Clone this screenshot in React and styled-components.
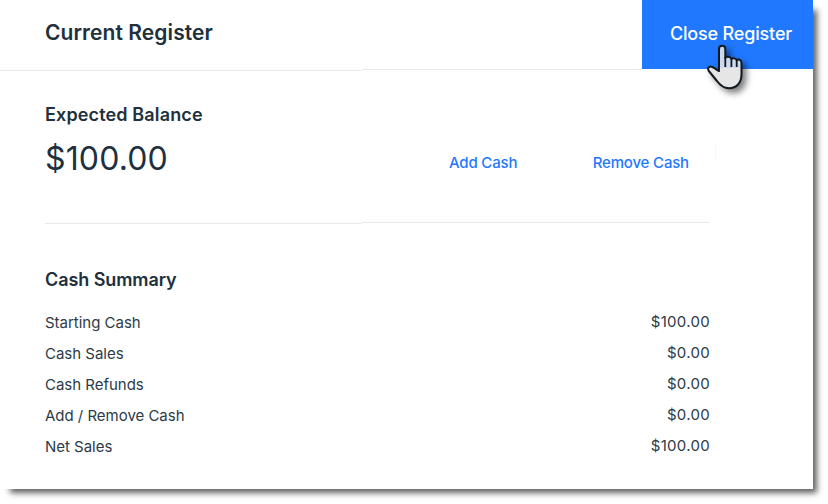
import React from "react";
import styled, {createGlobalStyle} from "styled-components";


const GlobalStyle = createGlobalStyle`
    *{
        box-sizing: border-box;
    }
    body{
        margin: 0;
        background-color: #fff;
        font-family: Inter, "Liberation Sans", sans-serif;
        color: #20303c;
    }
`;

const Page = styled.div`
    width: 828px;
    height: 504px;
    overflow: hidden;
    background-color: #fff;
`;

const Panel = styled.div`
    position: relative;
    width: 813px;
    height: 489px;
    background-color: #fff;
    box-shadow: 7px 7px 6px -3px rgba(0,0,0,0.62);
`;

const Header = styled.header`
    display: flex;
    flex-flow: column nowrap;
    height: 71px;
`;

const HeaderBar = styled.div`
    display: flex;
    flex: none;
    justify-content: space-between;
    height: 69px;
    padding-left: 45px;

    >h1{
        margin: 0;
        font-size: 21px;
        line-height: 65px;
        font-weight: 600;
        letter-spacing: 0.08px;
    }
`;

const CloseButton = styled.button`
    width: 171px;
    height: 69px;
    padding: 0 0 2px 7px;
    border: 0;
    background-color: #1f78ff;
    color: #fff;
    font: 500 18px Inter, "Liberation Sans", sans-serif;
    letter-spacing: -0.17px;
    white-space: nowrap;
`;

/* the rule steps up by one pixel at its second part */
const Rule = styled.div`
    display: flex;
    flex: none;
    height: 2px;
    width: ${p => p.$width}px;

    &::before, &::after{
        content: "";
        height: 1px;
        background-color: #e6e9ee;
    }
    &::before{
        width: ${p => p.$step}px;
        margin-top: 1px;
    }
    &::after{
        flex: 1;
    }
`;

const Content = styled.main`
    width: 710px;
    padding-left: 45px;
`;

const SectionTitle = styled.h2`
    margin: 0;
    font-size: 18px;
    line-height: 24px;
    font-weight: 600;
    letter-spacing: ${p => p.$spacing || 0}px;
`;

const Balance = styled.section`
    height: 151px;
    padding-top: 32px;
`;

const BalanceRow = styled.div`
    display: flex;
    align-items: center;
    height: 62px;
    width: 671px;
`;

const Amount = styled.div`
    width: 404px;
    padding-top: 2px;
    font-size: 32px;
    line-height: 40px;
    letter-spacing: 0.15px;
`;

const CashLink = styled.a`
    margin-right: ${p => p.$gap || 0}px;
    padding-top: 10px;
    color: #1f78ff;
    font-size: 15px;
    line-height: 20px;
    font-weight: 500;
    letter-spacing: -0.18px;
    white-space: nowrap;
`;

const Tick = styled.i`
    width: 1px;
    height: 18px;
    margin: 0 0 12px auto;
    background-color: #f6f7f9;
`;

const Summary = styled.section`
    padding-top: 44px;
`;

const SummaryList = styled.dl`
    margin: 14.5px 0 0;
`;

const SummaryRow = styled.div`
    display: flex;
    justify-content: space-between;
    height: 31.1px;
    font-size: 15px;
    line-height: 31px;
    color: #2c3b47;

    >dt{
        letter-spacing: -0.02px;
    }
    >dd{
        margin: -1px 0 0;
        letter-spacing: 0.3px;
    }
`;

const Pointer = styled.svg`
    position: absolute;
    left: 700px;
    top: 40px;
    overflow: visible;
    filter: drop-shadow(4px 4px 3px rgba(0,0,0,0.5));
`;


const rows = [
    {name: "Starting Cash", value: "$100.00"},
    {name: "Cash Sales", value: "$0.00"},
    {name: "Cash Refunds", value: "$0.00"},
    {name: "Add / Remove Cash", value: "$0.00"},
    {name: "Net Sales", value: "$100.00"},
];

const HandPointer = () => (
    <Pointer width="50" height="54" viewBox="0 0 50 54">
        <defs>
            <linearGradient id="hand" x1="0" y1="0" x2="0" y2="1">
                <stop offset="0" stopColor="#c7d6f0" />
                <stop offset="0.52" stopColor="#ced9ec" />
                <stop offset="0.53" stopColor="#e6e6e6" />
                <stop offset="1" stopColor="#e6e6e6" />
            </linearGradient>
        </defs>
        <path
            d="M19 31 V9 C19 4.8 25.3 4.8 25.3 9 V18 C26 16.2 30.7 16.3 31.4 19 C32.5 17.8 36 18.1 36.7 20.3 C38.4 18.8 41.5 19.6 41.5 23 V34 C41.5 43 36.5 48.2 29 48.2 C23 48.2 19.6 44.5 17 41 L8.8 31 C6.9 27.7 9.5 25.8 12.3 27 C15 28.2 16.7 30 19 31 Z"
            fill="url(#hand)" stroke="#101820" strokeWidth="2" strokeLinejoin="round"
        />
        <path d="M25.3 17 V27 M31.4 19 V27 M36.7 20 V27" fill="none" stroke="#101820" strokeWidth="1.8" />
    </Pointer>
);


function App() {
  return (
    <Page>
        <GlobalStyle />
        <Panel>
            <Header>
                <HeaderBar>
                    <h1>Current Register</h1>
                    <CloseButton>Close Register</CloseButton>
                </HeaderBar>
                <Rule $width={642} $step={362} />
            </Header>
            <Content>
                <Balance>
                    <SectionTitle $spacing={0.14}>Expected Balance</SectionTitle>
                    <BalanceRow>
                        <Amount>$100.00</Amount>
                        <CashLink $gap={75.5}>Add Cash</CashLink>
                        <CashLink>Remove Cash</CashLink>
                        <Tick />
                    </BalanceRow>
                </Balance>
                <Rule $width={665} $step={317} />
                <Summary>
                    <SectionTitle $spacing={-0.08}>Cash Summary</SectionTitle>
                    <SummaryList>
                        { rows.map((v,i)=><SummaryRow key={i}><dt>{v.name}</dt><dd>{v.value}</dd></SummaryRow>) }
                    </SummaryList>
                </Summary>
            </Content>
            <HandPointer />
        </Panel>
    </Page>
  );
}

export default App;
